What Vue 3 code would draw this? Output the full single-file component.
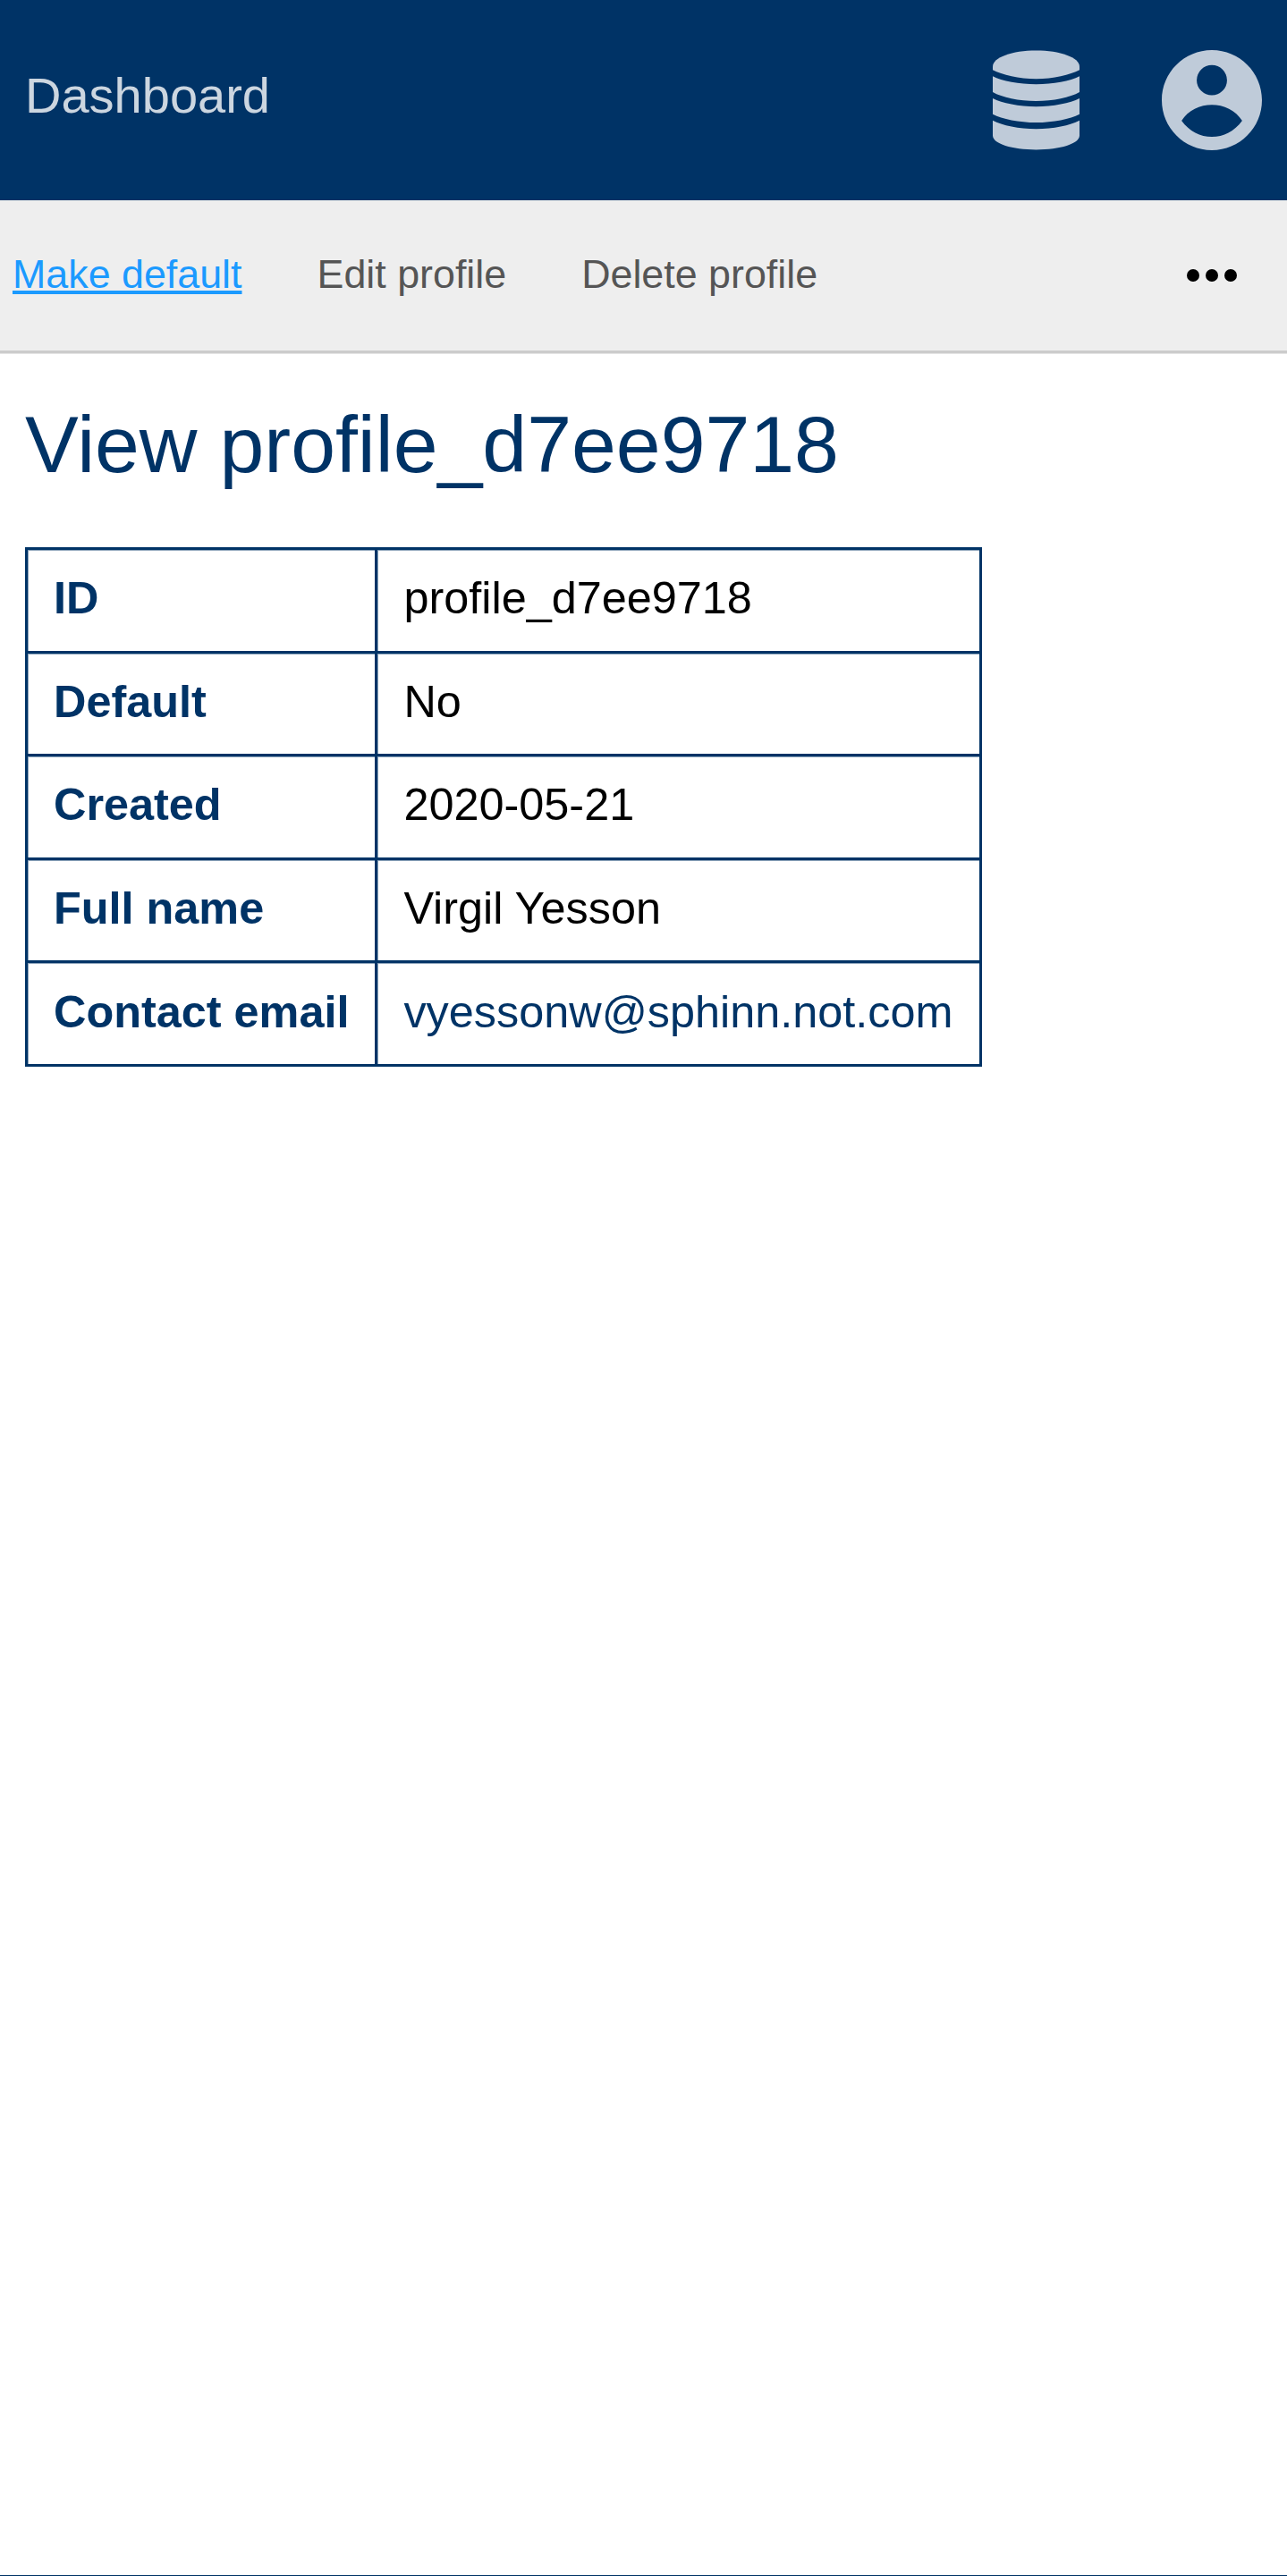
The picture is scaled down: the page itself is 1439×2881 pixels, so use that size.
<template>
  <div class="page">
    <header class="topbar">
      <a class="brand">Dashboard</a>
      <div class="top-icons">
        <svg viewBox="0 0 448 512" width="97" height="112">
          <path fill="#bfcbd9" d="M0 82C0 36 100 0 224 0S448 36 448 82V100C400 125 312 146 224 146S48 125 0 100Z" />
          <path fill="#bfcbd9" d="M0 133C48 158 136 174 224 174S400 158 448 133V215C400 243 312 261 224 261S48 243 0 215Z" />
          <path fill="#bfcbd9" d="M0 247C48 272 136 289 224 289S400 272 448 247V329C400 354 312 372 224 372S48 354 0 329Z" />
          <path fill="#bfcbd9" d="M0 361C48 387 136 405 224 405S400 387 448 361V439C448 482 348 512 224 512S0 482 0 439Z" />
        </svg>
        <svg viewBox="0 8 496 496" width="112" height="112">
          <path
            fill="#bfcbd9"
            fill-rule="evenodd"
            d="M248 8C111 8 0 119 0 256s111 248 248 248 248-111 248-248S385 8 248 8ZM248 82a75 75 0 1 1 0 150 75 75 0 1 1 0-150ZM98 358C130 305 190 279 248 279S366 305 398 358C360 410 305 438 248 438S136 410 98 358Z"
          />
        </svg>
      </div>
    </header>
    <nav class="subbar">
      <a class="sub-link active">Make default</a>
      <a class="sub-link">Edit profile</a>
      <a class="sub-link">Delete profile</a>
      <span class="more"><i></i><i></i><i></i></span>
    </nav>
    <main class="content">
      <h1>View profile_d7ee9718</h1>
      <table>
        <tbody>
          <tr v-for="row in rows" :key="row.label">
            <th>{{ row.label }}</th>
            <td><a v-if="row.link" class="mail">{{ row.value }}</a><template v-else>{{ row.value }}</template></td>
          </tr>
        </tbody>
      </table>
    </main>
    <div class="foot-line"></div>
  </div>
</template>

<script setup>
const rows = [
  { label: 'ID', value: 'profile_d7ee9718' },
  { label: 'Default', value: 'No' },
  { label: 'Created', value: '2020-05-21' },
  { label: 'Full name', value: 'Virgil Yesson' },
  { label: 'Contact email', value: 'vyessonw@sphinn.not.com', link: true }
]
</script>

<style>
html, body { margin: 0; background: #fff; }
</style>

<style scoped>
.page {
  height: 2881px;
  display: flex;
  flex-direction: column;
  font-family: "Liberation Sans", Arial, sans-serif;
  color: #000;
  box-sizing: border-box;
}
.topbar {
  height: 224px;
  background: #003366;
  display: flex;
  align-items: center;
  justify-content: space-between;
  padding: 0 28px;
  flex: none;
}
.brand {
  font-size: 56px;
  color: #ccd6e0;
  margin-bottom: 12px;
}
.top-icons {
  display: flex;
  align-items: center;
  gap: 92px;
}
.top-icons svg { display: block; }
.subbar {
  height: 171px;
  flex: none;
  box-sizing: border-box;
  background: #eee;
  border-bottom: 3px solid #ccc;
  box-shadow: 0 1px 0 rgba(204, 204, 204, 0.5);
  display: flex;
  align-items: center;
  padding: 0 56px 0 14px;
  gap: 84px;
  font-size: 44.8px;
}
.sub-link { color: #555; margin-bottom: 3px; }
.sub-link.active { color: #1b9aff; text-decoration: underline; }
.more {
  margin-left: auto;
  display: flex;
  gap: 7px;
}
.more i {
  width: 14px;
  height: 14px;
  border-radius: 50%;
  background: #000;
}
.content {
  padding: 0 28px;
  flex: 1;
}
h1 {
  font-size: 89.6px;
  font-weight: 400;
  color: #003366;
  margin: 52px 0 65px;
  line-height: 100px;
}
table {
  border-spacing: 0;
  border-top: 3px solid #003366;
  border-left: 3px solid #003366;
  font-size: 50.4px;
}
th, td {
  border-right: 3px solid #003366;
  border-bottom: 3px solid #003366;
  padding: 0 29px 5px;
  height: 107.6px;
  text-align: left;
  box-shadow: inset 1px 1px 0 rgba(0, 51, 102, 0.45);
}
th { color: #003366; font-weight: 700; }
.mail { color: #003366; }
.foot-line {
  height: 1px;
  background: #003366;
  flex: none;
}
</style>
